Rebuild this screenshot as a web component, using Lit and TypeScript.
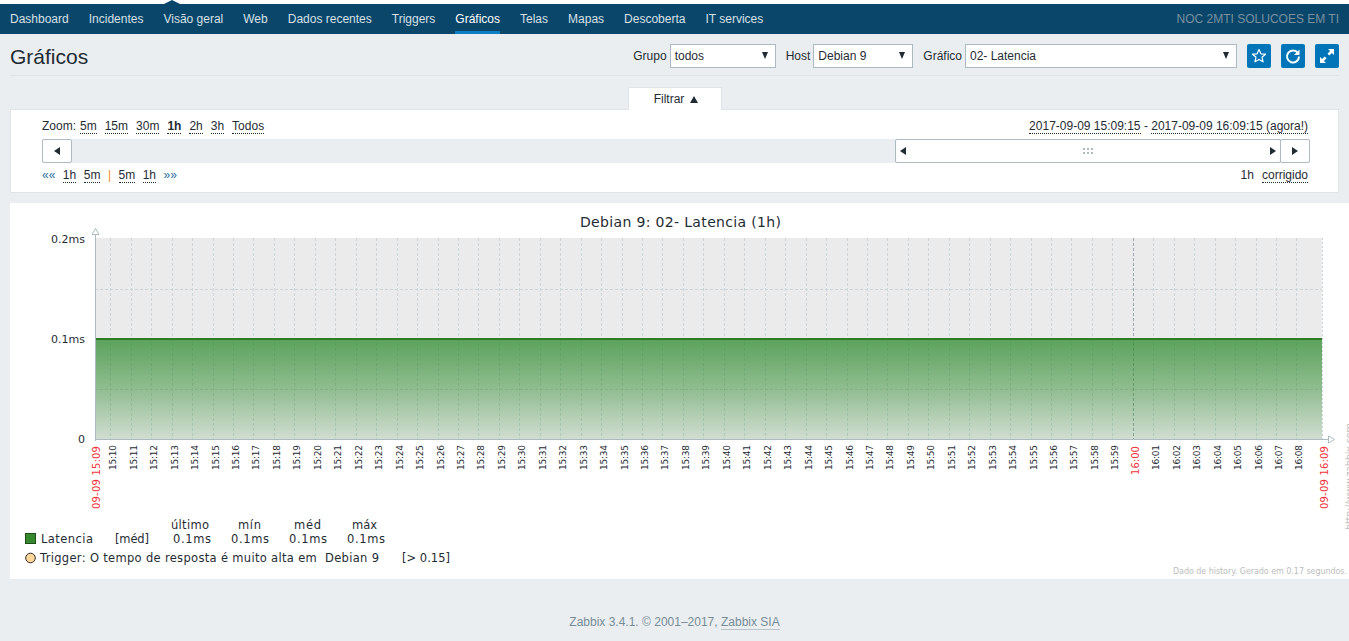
import { LitElement, html, css, svg } from 'lit';
import { customElement } from 'lit/decorators.js';

const NAV = ['Dashboard', 'Incidentes', 'Visão geral', 'Web', 'Dados recentes', 'Triggers', 'Gráficos', 'Telas', 'Mapas', 'Descoberta', 'IT services'];
const ZOOMS = ['5m', '15m', '30m', '1h', '2h', '3h', 'Todos'];

// chart geometry, in coordinates of the svg (its origin is the panel corner)
const LEFT = 85;
const RIGHT = 1312;
const TOP = 35;
const BOTTOM = 236;
const STEP = (RIGHT - LEFT) / 60;

function minuteLabel(i: number) {
  const total = 15 * 60 + 10 + i;
  const h = Math.floor(total / 60);
  const m = total % 60;
  return `${h}:${String(m).padStart(2, '0')}`;
}

@customElement('app-root')
export class AppRoot extends LitElement {
  static styles = css`
    :host {
      display: block;
      min-height: 641px;
      background: #ebeef0;
      font-family: 'Liberation Sans', Arial, sans-serif;
      font-size: 12px;
      color: #1f2c33;
      overflow: hidden;
    }
    * {
      box-sizing: border-box;
    }

    .top-gap {
      height: 4px;
      background: #fff;
      position: relative;
    }
    .top-gap::after {
      content: '';
      position: absolute;
      left: 164px;
      top: 0;
      border-left: 8px solid transparent;
      border-right: 8px solid transparent;
      border-bottom: 4px solid #0a466a;
    }
    .nav {
      display: flex;
      align-items: stretch;
      height: 30px;
      background: #0a466a;
      padding: 0 10px 0 0;
    }
    .nav a {
      display: block;
      margin-left: 10px;
      margin-right: 10px;
      line-height: 30px;
      color: #d5e0e7;
    }
    .nav a.active {
      color: #fff;
      border-bottom: 3px solid #0e7fc2;
    }
    .nav .brand {
      margin-left: auto;
      line-height: 31px;
      color: #77919f;
    }

    .header {
      display: flex;
      align-items: center;
      height: 42px;
      margin: 0 10px;
      padding-top: 2px;
      border-bottom: 1px solid #dfe4e7;
    }
    h1 {
      margin: 2px 0 0;
      font-size: 21px;
      font-weight: normal;
      color: #1f2c33;
    }
    .controls {
      display: flex;
      align-items: center;
      margin-left: auto;
    }
    .controls label {
      margin-right: 3px;
    }
    .select {
      display: flex;
      align-items: center;
      justify-content: space-between;
      height: 24px;
      padding: 0 7px 0 4px;
      background: #fff;
      border: 1px solid #acbbc2;
      margin-right: 10px;
    }
    .select::after {
      content: '';
      border-left: 3.5px solid transparent;
      border-right: 3.5px solid transparent;
      border-top: 7px solid #1f2c33;
    }
    .icon-btn {
      width: 24px;
      height: 24px;
      background: #0275b8;
      border-radius: 2px;
      margin-left: 10px;
      display: flex;
      align-items: center;
      justify-content: center;
    }
    .select + .icon-btn {
      margin-left: 0;
    }

    .tab-row {
      display: flex;
      justify-content: flex-start;
      padding-left: 628px;
      margin-top: 11px;
    }
    .tab {
      display: flex;
      align-items: center;
      justify-content: center;
      gap: 6px;
      width: 94px;
      height: 23px;
      padding-left: 2px;
      background: #fff;
      border: 1px solid #dfe4e7;
      border-bottom: 0;
      margin-bottom: -1px;
      position: relative;
    }
    .tab i {
      border-left: 4px solid transparent;
      border-right: 4px solid transparent;
      border-bottom: 7px solid #1f2c33;
    }
    .filter {
      height: 84px;
      margin: 0 10px;
      background: #fff;
      border: 1px solid #dfe4e7;
      padding: 7px 30px 7px 31px;
    }
    .row {
      display: flex;
      align-items: center;
      justify-content: space-between;
      height: 18px;
    }
    .links {
      display: flex;
      align-items: center;
      gap: 8px;
    }
    .links.tight {
      gap: 7.5px;
    }
    .zoom-label {
      margin-right: -4px;
    }
    .u {
      border-bottom: 1px dotted #1f2c33;
      line-height: 14px;
    }
    .cur {
      font-weight: bold;
    }
    .arrows {
      color: #2a6f9e;
    }
    .sep {
      color: #f48c1e;
    }
    .band {
      display: flex;
      height: 24px;
      margin: 4px -2px 3px 0;
      background: #ebeef0;
    }
    .band .grow {
      flex: 1;
    }
    .btn {
      display: flex;
      align-items: center;
      justify-content: center;
      background: #fff;
      border: 1px solid #acbbc2;
      border-radius: 2px;
    }
    .left-btn {
      width: 30px;
    }
    .slider {
      width: 386px;
      justify-content: space-between;
      padding: 0 4px;
    }
    .right-btn {
      width: 30px;
      margin-left: -1px;
    }
    .tri-l {
      border-top: 4px solid transparent;
      border-bottom: 4px solid transparent;
      border-right: 6px solid #1f2c33;
    }
    .tri-r {
      border-top: 4px solid transparent;
      border-bottom: 4px solid transparent;
      border-left: 6px solid #1f2c33;
    }

    .chart {
      margin: 10px 0 0 10px;
      height: 376px;
      background: #fff;
    }
    .chart svg {
      display: block;
    }
    .chart text {
      font-family: 'DejaVu Sans', sans-serif;
      fill: #1f2c33;
    }
    .chart text.red {
      fill: #f0333a;
    }
    .chart text.faint {
      fill: #bdbdbd;
    }

    .footer {
      margin-top: 36px;
      text-align: center;
      color: #768d99;
    }
    .footer span {
      border-bottom: 1px solid #b9c5cb;
    }
  `;

  private renderChart() {
    const grid = [];
    const labels = [];
    for (let i = 0; i < 59; i++) {
      const x = Math.round(LEFT + (45 / 60) * STEP + i * STEP) + 0.5;
      const hour = i === 50;
      grid.push(svg`<line x1=${x} x2=${x} y1=${TOP} y2=${BOTTOM} stroke=${hour ? '#9aa7ad' : '#ccd5d9'} stroke-dasharray="3 2"></line>`);
      labels.push(hour
        ? svg`<text class="red" font-size="10" text-anchor="end" transform="translate(${x + 5} 243) rotate(-90)" textLength="29">${minuteLabel(i)}</text>`
        : svg`<text font-size="9" text-anchor="end" transform="translate(${x + 5} 242) rotate(-90)" textLength="25">${minuteLabel(i)}</text>`);
    }
    return html`<svg width="1339" height="376" viewBox="0 0 1339 376">
      <defs>
        <linearGradient id="area" x1="0" y1="0" x2="0" y2="1">
          <stop offset="0" stop-color="#2e8b2e" stop-opacity="0.76"></stop>
          <stop offset="0.5" stop-color="#2e8b2e" stop-opacity="0.48"></stop>
          <stop offset="1" stop-color="#2e8b2e" stop-opacity="0.14"></stop>
        </linearGradient>
      </defs>
      <text x="570" y="24" font-size="14" textLength="201">Debian 9: 02- Latencia (1h)</text>

      <rect x=${LEFT} y=${TOP} width=${RIGHT - LEFT} height=${BOTTOM - TOP} fill="#ebebeb"></rect>
      <line x1=${LEFT} x2=${RIGHT} y1="86.5" y2="86.5" stroke="#ccd5d9" stroke-dasharray="3 2"></line>
      <line x1=${LEFT} x2=${RIGHT} y1="186.5" y2="186.5" stroke="#ccd5d9" stroke-dasharray="3 2"></line>
      ${grid}
      <line x1=${RIGHT + 0.5} x2=${RIGHT + 0.5} y1=${TOP} y2=${BOTTOM} stroke="#ccd5d9" stroke-dasharray="2 2"></line>
      <rect x=${LEFT} y="136" width=${RIGHT - LEFT} height=${BOTTOM - 136} fill="url(#area)"></rect>
      <rect x=${LEFT} y="135" width=${RIGHT - LEFT} height="2" fill="#2a7f23"></rect>

      <line x1="85.5" x2="85.5" y1="30" y2="238" stroke="#acbbc2"></line>
      <path d="M85.5 25.5 L89 31.5 H82 Z" fill="#fff" stroke="#acbbc2"></path>
      <line x1="85" x2="1318" y1="236.5" y2="236.5" stroke="#acbbc2"></line>
      <path d="M1324.5 236.5 L1318.5 233 V240 Z" fill="#fff" stroke="#acbbc2"></path>

      <text x="75" y="40" font-size="11" text-anchor="end">0.2ms</text>
      <text x="75" y="140" font-size="11" text-anchor="end">0.1ms</text>
      <text x="75" y="240" font-size="11" text-anchor="end">0</text>

      <text class="red" font-size="10" text-anchor="end" transform="translate(90 243) rotate(-90)" textLength="63">09-09 15:09</text>
      ${labels}
      <text class="red" font-size="10" text-anchor="end" transform="translate(1318 243) rotate(-90)" textLength="63">09-09 16:09</text>
      <text class="faint" font-size="10" text-anchor="end" transform="translate(1342.6 220) rotate(-90)" textLength="107">http://www.zabbix.com</text>

      <rect x="15.5" y="330.5" width="10" height="10" fill="#36882f" stroke="#1f4d1a"></rect>
      <text x="31" y="340" font-size="11.5" textLength="52">Latencia</text>
      <text x="105" y="340" font-size="11.5" textLength="34">[méd]</text>
      <text x="161" y="326" font-size="11.5" textLength="38">último</text>
      <text x="163" y="340" font-size="11.5" textLength="38">0.1ms</text>
      <text x="228" y="326" font-size="11.5" textLength="23">mín</text>
      <text x="221" y="340" font-size="11.5" textLength="38">0.1ms</text>
      <text x="284" y="326" font-size="11.5" textLength="27">méd</text>
      <text x="279" y="340" font-size="11.5" textLength="38">0.1ms</text>
      <text x="342" y="326" font-size="11.5" textLength="25">máx</text>
      <text x="337" y="340" font-size="11.5" textLength="38">0.1ms</text>

      <circle cx="20.5" cy="355" r="4.8" fill="#ffd699" stroke="#2b2b2b"></circle>
      <text x="30" y="359" font-size="11.5" textLength="339" xml:space="preserve">Trigger: O tempo de resposta é muito alta em  Debian 9</text>
      <text x="392" y="359" font-size="11.5" textLength="48">[&gt; 0.15]</text>

      <text class="faint" x="1163" y="371" font-size="8" textLength="174">Dado de history. Gerado em 0.17 segundos.</text>
    </svg>`;
  }

  render() {
    return html`
      <div class="top-gap"></div>
      <nav class="nav">
        ${NAV.map(n => html`<a class=${n === 'Gráficos' ? 'active' : ''}>${n}</a>`)}
        <span class="brand">NOC 2MTI SOLUCOES EM TI</span>
      </nav>

      <div class="header">
        <h1>Gráficos</h1>
        <div class="controls">
          <label>Grupo</label>
          <div class="select" style="width:106px">todos</div>
          <label>Host</label>
          <div class="select" style="width:100px">Debian 9</div>
          <label>Gráfico</label>
          <div class="select" style="width:272px">02- Latencia</div>
          <div class="icon-btn">
            <svg width="16" height="16" viewBox="0 0 16 16"><path d="M8 1.5l1.9 4.3 4.6.4-3.5 3 1.1 4.6L8 11.4l-4.1 2.4L5 9.2l-3.5-3 4.6-.4z" fill="none" stroke="#fff" stroke-width="1.2" stroke-linejoin="round"></path></svg>
          </div>
          <div class="icon-btn">
            <svg width="18" height="18" viewBox="0 0 18 18"><path d="M14 6.2A6 6 0 1 0 15 9.5" fill="none" stroke="#fff" stroke-width="2"></path><path d="M15.5 2.5v5.5h-5.5z" fill="#fff"></path></svg>
          </div>
          <div class="icon-btn">
            <svg width="18" height="18" viewBox="0 0 18 18"><path d="M10 2h6v6l-2.1-2.1-2.6 2.6-1.8-1.8 2.6-2.6zM8 16H2v-6l2.1 2.1 2.6-2.6 1.8 1.8-2.6 2.6z" fill="#fff"></path></svg>
          </div>
        </div>
      </div>

      <div class="tab-row"><div class="tab">Filtrar <i></i></div></div>
      <section class="filter">
        <div class="row">
          <div class="links">
            <span class="zoom-label">Zoom:</span>
            ${ZOOMS.map(z => html`<span class="u ${z === '1h' ? 'cur' : ''}">${z}</span>`)}
          </div>
          <div><span class="u">2017-09-09 15:09:15</span> - <span class="u">2017-09-09 16:09:15 (agora!)</span></div>
        </div>
        <div class="band">
          <div class="btn left-btn"><i class="tri-l"></i></div>
          <div class="grow"></div>
          <div class="btn slider">
            <i class="tri-l"></i>
            <svg width="11" height="7" viewBox="0 0 11 7"><path d="M0 0h2v2H0zM4 0h2v2H4zM8 0h2v2H8zM0 4h2v2H0zM4 4h2v2H4zM8 4h2v2H8z" fill="#acbbc2"></path></svg>
            <i class="tri-r"></i>
          </div>
          <div class="btn right-btn"><i class="tri-r"></i></div>
        </div>
        <div class="row">
          <div class="links tight">
            <span class="arrows">««</span>
            <span class="u">1h</span>
            <span class="u">5m</span>
            <span class="sep">|</span>
            <span class="u">5m</span>
            <span class="u">1h</span>
            <span class="arrows">»»</span>
          </div>
          <div class="links"><span>1h</span><span class="u">corrigido</span></div>
        </div>
      </section>

      <section class="chart">${this.renderChart()}</section>

      <footer class="footer">Zabbix 3.4.1. © 2001–2017, <span>Zabbix SIA</span></footer>
    `;
  }
}
